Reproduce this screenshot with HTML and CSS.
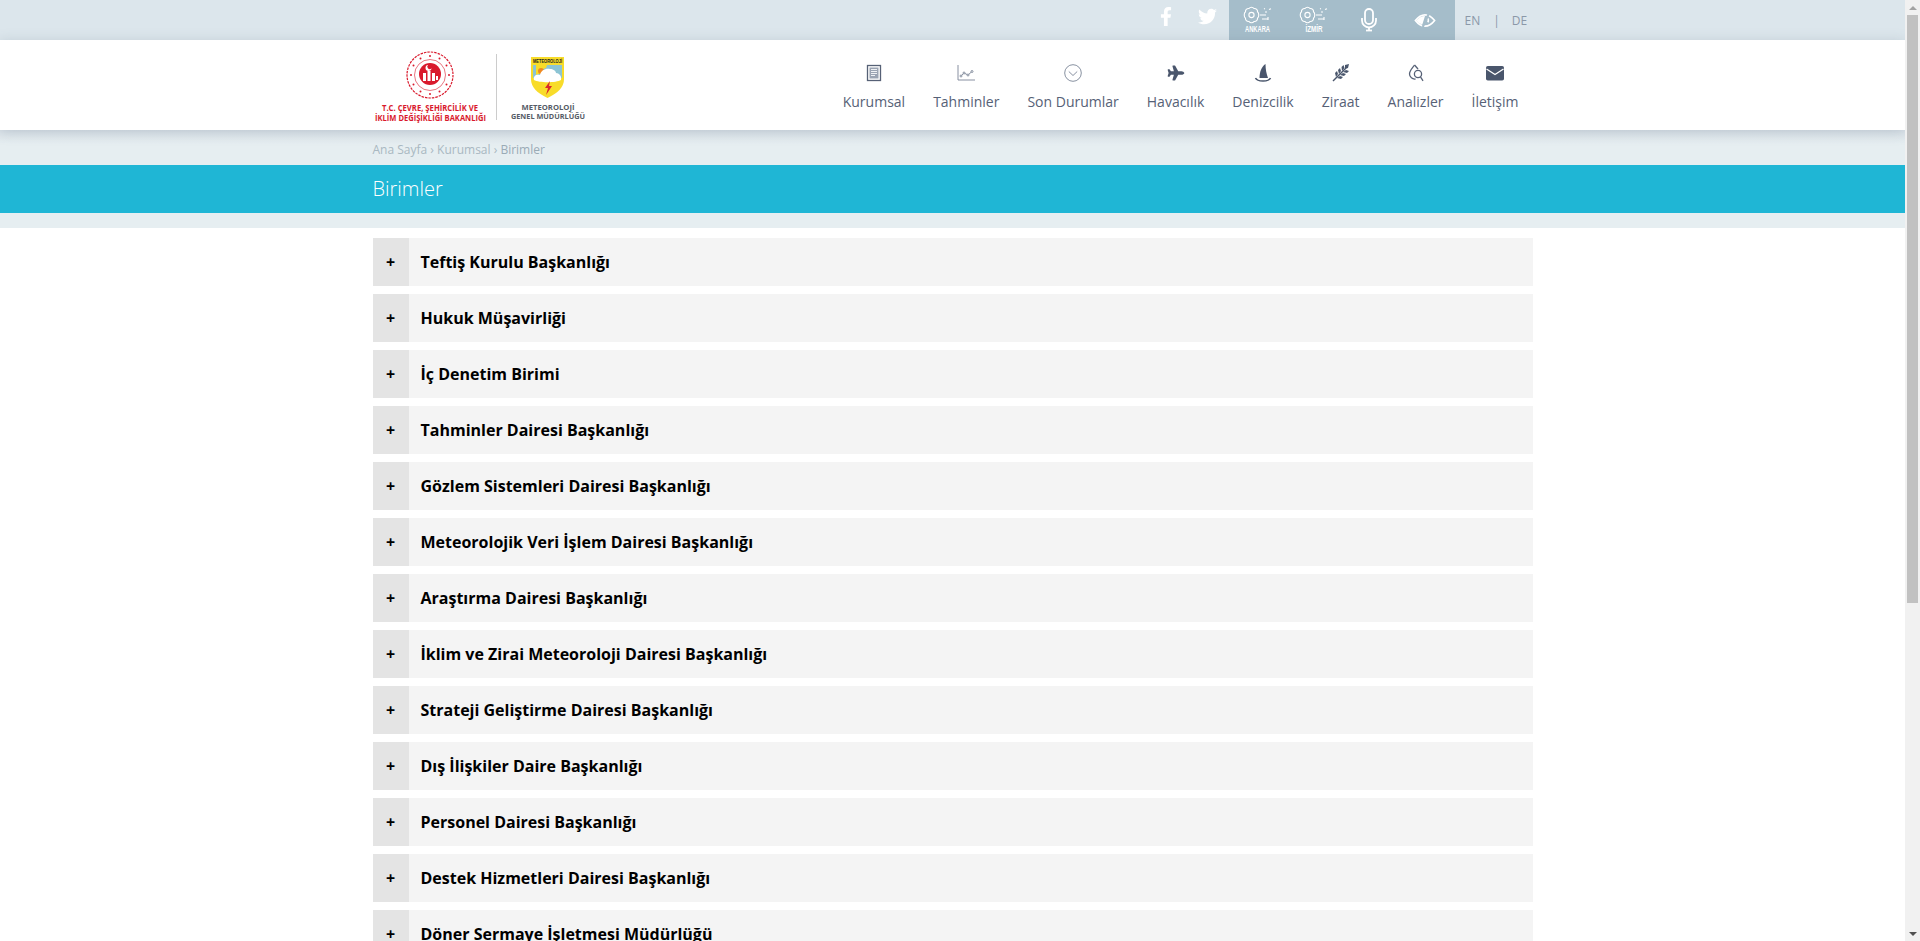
FILE: index.html
```html
<!DOCTYPE html>
<html lang="tr">
<head>
<meta charset="utf-8">
<title>Birimler</title>
<link rel="stylesheet" href="styles.css">
</head>
<body>
<div class="topbar">
  <div class="wrap topbar-in">
    <div class="social">
      <a class="social-link" href="#"><svg class="ic-fb" viewBox="0 0 320 512"><path d="M279.14 288l14.22-92.66h-88.91v-60.13c0-25.35 12.42-50.06 52.24-50.06h40.42V6.26S260.43 0 225.36 0c-73.22 0-121.08 44.38-121.08 124.72v70.62H22.89V288h81.39v224h100.17V288z"/></svg></a>
      <a class="social-link" href="#"><svg class="ic-tw" viewBox="0 0 512 512"><path d="M459.37 151.716c.325 4.548.325 9.097.325 13.645 0 138.72-105.583 298.558-298.558 298.558-59.452 0-114.68-17.219-161.137-47.106 8.447.974 16.568 1.299 25.34 1.299 49.055 0 94.213-16.568 130.274-44.832-46.132-.975-84.792-31.188-98.112-72.772 6.498.974 12.995 1.624 19.818 1.624 9.421 0 18.843-1.3 27.614-3.573-48.081-9.747-84.143-51.98-84.143-102.985v-1.299c13.969 7.797 30.214 12.67 47.431 13.319-28.264-18.843-46.781-51.005-46.781-87.391 0-19.492 5.197-37.36 14.294-52.954 51.655 63.675 129.3 105.258 216.365 109.807-1.624-7.797-2.599-15.918-2.599-24.04 0-57.828 46.782-104.934 104.934-104.934 30.213 0 57.502 12.67 76.67 33.137 23.715-4.548 46.456-13.32 66.599-25.34-7.798 23.715-24.366 43.858-46.132 56.853 21.117-2.273 41.584-8.122 60.426-16.243-14.292 20.791-32.161 39.308-52.628 54.253z"/></svg></a>
    </div>
    <div class="tools">
      <a class="tool" href="#"><svg class="ic-city" viewBox="0 0 30 36">
        <g class="thin"><path d="M7 6.500c1.200-1.700 3.800-1.700 5 0 2.200-.2 3.800 1.400 3.500 3.300 1.700 1.300 1.700 5.100 0 6.400.3 1.900-1.300 3.500-3.500 3.300-1.200 1.700-3.800 1.700-5 0-2.200.2-3.800-1.400-3.500-3.300-1.700-1.300-1.700-5.100 0-6.400C3.200 7.900 4.800 6.300 7 6.500z"/><circle cx="9.500" cy="13" r="2.600"/><path d="M18 13h6M23 10h2M27 7.500l2-.8M20 17h6M26 15v3M22 7l1-.5"/></g>
        <text class="city" x="15.500" y="30" textLength="25" lengthAdjust="spacingAndGlyphs">ANKARA</text></svg></a>
      <a class="tool" href="#"><svg class="ic-city" viewBox="0 0 30 36">
        <g class="thin"><path d="M7 6.500c1.200-1.700 3.800-1.700 5 0 2.200-.2 3.800 1.400 3.500 3.300 1.700 1.300 1.700 5.100 0 6.400.3 1.900-1.300 3.500-3.500 3.300-1.200 1.700-3.800 1.700-5 0-2.200.2-3.800-1.400-3.500-3.300-1.700-1.300-1.700-5.100 0-6.400C3.200 7.900 4.800 6.300 7 6.500z"/><circle cx="9.500" cy="13" r="2.600"/><path d="M18 13h6M23 10h2M27 7.500l2-.8M20 17h6M26 15v3M22 7l1-.5"/></g>
        <text class="city" x="16" y="30" textLength="17" lengthAdjust="spacingAndGlyphs">İZMİR</text></svg></a>
      <a class="tool" href="#"><svg class="ic-mic" viewBox="0 0 18 24">
        <rect class="thick" x="5" y="1" width="8" height="15" rx="4"/><path class="thick" d="M2 10v2.500a7 7 0 0 0 14 0V10"/><path class="thick" d="M9 19.500V22"/><path class="thick" d="M6 22.500h6"/></svg></a>
      <a class="tool" href="#"><svg class="ic-eye" viewBox="0 0 24 16">
        <path class="thick" d="M1.500 8C5 3.500 8.500 1.800 12 1.800S19 3.500 22.500 8C19 12.500 15.500 14.200 12 14.200S5 12.500 1.500 8z"/>
        <path class="eye-fill" d="M2.500 8C5 5 8 3 12 3l-3 9.500C6 11.500 4 10 2.500 8z"/>
        <path class="thick" d="M14 5a3.500 3.500 0 0 1 1 5"/><path class="slash" d="M16 1L9.500 15"/></svg></a>
    </div>
    <div class="langs"><a href="#">EN</a><span class="sep">|</span><a href="#">DE</a></div>
  </div>
</div>

<header class="header">
  <div class="wrap header-in">
    <a class="logo" href="#">
      <svg class="logo-svg" viewBox="0 0 216 90">
        <g class="emblem">
          <circle class="ring" cx="57" cy="35" r="23"/>
          <circle class="ring-in" cx="57" cy="35" r="15.500"/>
          <g class="stars">
            <circle cx="57" cy="16" r="1"/><circle cx="66.500" cy="18.500" r="1"/><circle cx="73.500" cy="25.500" r="1"/><circle cx="76" cy="35" r="1"/><circle cx="73.500" cy="44.500" r="1"/><circle cx="66.500" cy="51.500" r="1"/><circle cx="57" cy="54" r="1"/><circle cx="47.500" cy="51.500" r="1"/><circle cx="40.500" cy="44.500" r="1"/><circle cx="38" cy="35" r="1"/><circle cx="40.500" cy="25.500" r="1"/><circle cx="47.500" cy="18.500" r="1"/>
          </g>
          <circle class="emblem-core" cx="57" cy="34" r="11"/>
          <path class="emblem-white" d="M50 33h3v8h-3zM54.500 31h3v10h-3zM59 33h3v8h-3zM63 36h2v4h-2z"/>
          <path class="emblem-white" d="M55 25a3 3 0 1 0 3.500 3.300 2.400 2.400 0 1 1-3.500-3.300z"/>
        </g>
        <text class="logo-red" x="57" y="71" textLength="96" lengthAdjust="spacingAndGlyphs">T.C. ÇEVRE, ŞEHİRCİLİK VE</text>
        <text class="logo-red" x="57.500" y="81" textLength="111" lengthAdjust="spacingAndGlyphs">İKLİM DEĞİŞİKLİĞİ BAKANLIĞI</text>
        <path class="logo-div" d="M123.500 14v66"/>
        <g class="shield">
          <path class="sh-yellow" d="M158 17h33v22c0 8-6 14-16.500 19C164 53 158 47 158 39z"/>
          <path class="sh-blue" d="M160 25h29v13h-29z"/>
          <path class="sh-sun" d="M163 25h11l-1 3-3 1-1 4-6 2z"/>
          <circle class="sh-orange" cx="168" cy="31" r="3"/>
          <path class="sh-white" d="M161 40c-1-4 2-6 6-5 1-5 6-7 10-6 3 0 6 2 6 4 3 0 6 3 5 7-5 3-22 3-27 0z"/>
          <text class="sh-text" x="174.500" y="23" textLength="29" lengthAdjust="spacingAndGlyphs">METEOROLOJİ</text>
          <path class="sh-red" d="M177 41l-5 7h3l-2 7 6-9h-3z"/>
        </g>
        <text class="logo-dark" x="175" y="70" textLength="53" lengthAdjust="spacingAndGlyphs">METEOROLOJİ</text>
        <text class="logo-dark" x="175" y="79" textLength="74" lengthAdjust="spacingAndGlyphs">GENEL MÜDÜRLÜĞÜ</text>
      </svg>
    </a>
    <nav class="nav">
      <a class="nav-item" href="#"><svg class="nav-ic" viewBox="0 0 20 20"><rect class="n-line" x="3.500" y="2.500" width="13" height="15"/><rect class="n-fill" x="5.500" y="4.500" width="9" height="11"/><path class="n-w" d="M7 6.500h6M7 8.500h6M7 10.500h6M7 12.500h4"/></svg><span>Kurumsal</span></a>
      <a class="nav-item" href="#"><svg class="nav-ic" viewBox="0 0 20 20"><path class="n-thin" d="M2 2v15h17"/><circle class="n-thin" cx="5" cy="13" r="1"/><circle class="n-thin" cx="8" cy="10" r="1"/><circle class="n-thin" cx="12" cy="12" r="1"/><circle class="n-thin" cx="16" cy="8.500" r="1"/><path class="n-thin" d="M5.700 12.300l1.600-1.600M9 10.500l2 1M12.800 11.300l2.500-2.200"/></svg><span>Tahminler</span></a>
      <a class="nav-item" href="#"><svg class="nav-ic" viewBox="0 0 20 20"><circle class="n-thin" cx="10" cy="10" r="8.300"/><path class="n-thin" d="M5.800 8.500l4.200 4 4.200-4"/></svg><span>Son Durumlar</span></a>
      <a class="nav-item" href="#"><svg class="nav-ic" viewBox="-58 -50 692 612"><path class="n-solid" d="M480 192H365.710L260.610 8.060A16.014 16.014 0 0 0 246.710 0h-65.500c-10.630 0-18.300 10.170-15.380 20.390L214.860 192H112l-43.200-57.600c-3.020-4.030-7.770-6.400-12.800-6.400H16.010C5.600 128-2.040 137.780.49 147.880L32 256 .49 364.120C-2.040 374.220 5.600 384 16.010 384H56c5.040 0 9.780-2.370 12.800-6.400L112 320h102.860l-49.030 171.600c-2.920 10.220 4.750 20.400 15.380 20.400h65.500c5.740 0 11.040-3.080 13.890-8.060L365.710 320H480c35.350 0 96-28.650 96-64s-60.650-64-96-64z"/></svg><span>Havacılık</span></a>
      <a class="nav-item" href="#"><svg class="nav-ic" viewBox="0 0 20 20"><path class="n-solid" d="M12.500 1C8.500 3.500 6.500 9 6.500 15h8.500c-1.500-4-2.500-9-2.500-14z"/><path class="n-med" d="M2.500 15c1 2.300 3 3 7.500 3s6.500-.7 7.500-3"/></svg><span>Denizcilik</span></a>
      <a class="nav-item" href="#"><svg class="nav-ic" viewBox="0 0 20 20"><path class="n-med" d="M2 18L15 5"/><path class="n-solid" d="M5 14l-1-4 2-2 1 3zM8 11l-1-4 2-2 1 3zM11 8l-.5-4 2-2 1 3zM6 15l4 1 2-2-3-1zM9 12l4 1 2-2-3-1zM12 9l4 1 2-2-3-1zM14 6l0-4 4-1-1 4z"/></svg><span>Ziraat</span></a>
      <a class="nav-item" href="#"><svg class="nav-ic" viewBox="0 0 20 20"><path class="n-line" d="M8.500 2C6.500 5 3.500 7.500 3.500 11a5.200 5.200 0 0 0 6 5"/><path class="n-line" d="M8.500 2l3.500 4"/><circle class="n-line" cx="12" cy="11" r="3.600"/><path class="n-line" d="M14.500 13.800l2.500 4"/></svg><span>Analizler</span></a>
      <a class="nav-item" href="#"><svg class="nav-ic" viewBox="0 0 20 20"><rect class="n-solid" x="1" y="3" width="18" height="14.500" rx="1.800"/><path class="n-w2" d="M1.500 6l8.500 5.500L18.500 6"/></svg><span>İletişim</span></a>
    </nav>
  </div>
</header>

<div class="crumbs"><div class="wrap"><a href="#">Ana Sayfa</a> › <a href="#">Kurumsal</a> › <span class="crumb-now">Birimler</span></div></div>
<div class="title-bar"><div class="wrap"><h1>Birimler</h1></div></div>
<div class="title-foot"></div>

<main class="wrap list">
  <div class="row"><span class="plus">+</span><h2>Teftiş Kurulu Başkanlığı</h2></div>
  <div class="row"><span class="plus">+</span><h2>Hukuk Müşavirliği</h2></div>
  <div class="row"><span class="plus">+</span><h2>İç Denetim Birimi</h2></div>
  <div class="row"><span class="plus">+</span><h2>Tahminler Dairesi Başkanlığı</h2></div>
  <div class="row"><span class="plus">+</span><h2>Gözlem Sistemleri Dairesi Başkanlığı</h2></div>
  <div class="row"><span class="plus">+</span><h2>Meteorolojik Veri İşlem Dairesi Başkanlığı</h2></div>
  <div class="row"><span class="plus">+</span><h2>Araştırma Dairesi Başkanlığı</h2></div>
  <div class="row"><span class="plus">+</span><h2>İklim ve Zirai Meteoroloji Dairesi Başkanlığı</h2></div>
  <div class="row"><span class="plus">+</span><h2>Strateji Geliştirme Dairesi Başkanlığı</h2></div>
  <div class="row"><span class="plus">+</span><h2>Dış İlişkiler Daire Başkanlığı</h2></div>
  <div class="row"><span class="plus">+</span><h2>Personel Dairesi Başkanlığı</h2></div>
  <div class="row"><span class="plus">+</span><h2>Destek Hizmetleri Dairesi Başkanlığı</h2></div>
  <div class="row"><span class="plus">+</span><h2>Döner Sermaye İşletmesi Müdürlüğü</h2></div>
</main>

<div class="scrollbar" aria-hidden="true">
  <span class="sb-btn"><i class="sb-up"></i></span>
  <span class="sb-thumb"></span>
  <span class="sb-rest"></span>
  <span class="sb-btn"><i class="sb-down"></i></span>
</div>
</body>
</html>
```
FILE: styles.css
```css
* { box-sizing: border-box; }
body { margin: 0; padding-right: 15px; background: #fff; font-family: "Open Sans", "Liberation Sans", sans-serif; color: #000; }
a { color: inherit; text-decoration: none; }
.wrap { width: 1160px; margin: 0 auto; }

.scrollbar { position: fixed; z-index: 10; top: 0; right: 0; bottom: 0; width: 15px; display: flex; flex-direction: column; background: #f1f1f1; }
.sb-btn { flex: none; height: 15px; display: flex; align-items: center; justify-content: center; }
.sb-up { width: 0; height: 0; border: 4px solid transparent; border-top: 0; border-bottom: 4px solid #a3a3a3; }
.sb-down { width: 0; height: 0; border: 4px solid transparent; border-bottom: 0; border-top: 4px solid #505050; }
.sb-thumb { flex: none; height: 588px; margin: 0 2px; background: #c1c1c1; }
.sb-rest { flex: 1; }

.topbar { height: 40px; background: #dce6ec; }
.topbar-in { display: flex; justify-content: flex-end; height: 40px; }
.social { display: flex; align-items: center; height: 40px; }
.social-link { display: flex; justify-content: center; width: 42px; padding-bottom: 7px; fill: #fff; }
.ic-fb { width: 12px; height: 19px; }
.ic-tw { width: 19px; height: 19px; }
.tools { display: flex; width: 226px; height: 40px; background: #a5bdca; }
.tool { width: 56px; height: 40px; display: flex; align-items: center; justify-content: center; }
.ic-city { width: 30px; height: 36px; }
.ic-mic { width: 18px; height: 24px; }
.ic-eye { width: 22px; height: 15px; }
.thin { fill: none; stroke: #fff; stroke-width: 1.100; }
.thick { fill: none; stroke: #fff; stroke-width: 1.800; }
.eye-fill { fill: #fff; }
.slash { fill: none; stroke: #a5bdca; stroke-width: 2.500; }
.city { fill: #fff; font-family: "Liberation Sans", sans-serif; font-weight: 700; font-size: 9px; text-anchor: middle; }
.langs { width: 78px; display: flex; align-items: center; padding-left: 10px; font-size: 12px; color: #8b98a8; }
.sep { margin: 0 12px 0 13px; }

.header { position: relative; z-index: 2; height: 90px; background: #fff; box-shadow: 0 2px 12px rgba(90, 110, 130, .25); }
.header-in { display: flex; justify-content: space-between; height: 90px; }
.logo { display: block; width: 216px; height: 90px; }
.logo-svg { display: block; width: 216px; height: 90px; }
.ring { fill: none; stroke: #d9192c; stroke-width: 1.200; stroke-dasharray: 2.500 1; }
.ring-in { fill: none; stroke: #d9192c; stroke-width: .600; }
.stars { fill: #d9192c; }
.emblem-core { fill: #d9192c; }
.emblem-white { fill: #fff; }
.logo-red { fill: #d9192c; font-family: "Open Sans", sans-serif; font-weight: 700; font-size: 8px; text-anchor: middle; }
.logo-div { stroke: #ccc; stroke-width: 1; }
.logo-dark { fill: #555b66; font-family: "Open Sans", sans-serif; font-weight: 700; font-size: 7.500px; text-anchor: middle; }
.sh-yellow { fill: #f8dc2a; }
.sh-blue { fill: #8cc4d4; }
.sh-white { fill: #fff; }
.sh-sun { fill: #f8dc2a; }
.sh-orange { fill: #ef8a22; }
.sh-red { fill: #d9282c; }
.sh-text { fill: #1c1c1c; font-family: "Liberation Sans", sans-serif; font-weight: 700; font-size: 6px; text-anchor: middle; }

.nav { display: flex; height: 90px; }
.nav-item { display: flex; flex-direction: column; align-items: center; padding: 23px 14px 0; font-size: 14px; line-height: 19px; color: #566176; }
.nav-ic { width: 20px; height: 20px; margin-bottom: 9px; }
.n-line { fill: none; stroke: #566176; stroke-width: 1.300; }
.n-fill { fill: #9aa3b2; }
.n-w { fill: none; stroke: #eef0f3; stroke-width: 1; }
.n-thin { fill: none; stroke: #7b8596; stroke-width: .900; }
.n-solid { fill: #4a566c; }
.n-med { fill: none; stroke: #4a566c; stroke-width: 1.500; }
.n-w2 { fill: none; stroke: #fff; stroke-width: 1.300; }

.crumbs { height: 35px; background: linear-gradient(#dbe3e9, #e6eef1 14px); padding-top: 11px; font-size: 12px; line-height: 18px; color: #a9b8c1; }
.crumb-now { color: #9aabb6; }
.title-bar { height: 48px; background: #1fb6d5; color: #fff; }
.title-bar h1 { margin: 0; font-size: 20px; font-weight: 300; line-height: 48px; }
.title-foot { height: 15px; background: #e6eef1; }

.list { display: flex; flex-direction: column; gap: 8px; padding: 10px 0 500px; }
.row { display: flex; align-items: center; height: 48px; background: #f4f4f4; }
.plus { width: 36px; height: 48px; background: #e4e4e4; font-weight: 700; font-size: 16px; line-height: 48px; text-align: center; margin-right: 12px; }
.row h2 { margin: 0; font-size: 16px; font-weight: 700; line-height: 48px; }
```
